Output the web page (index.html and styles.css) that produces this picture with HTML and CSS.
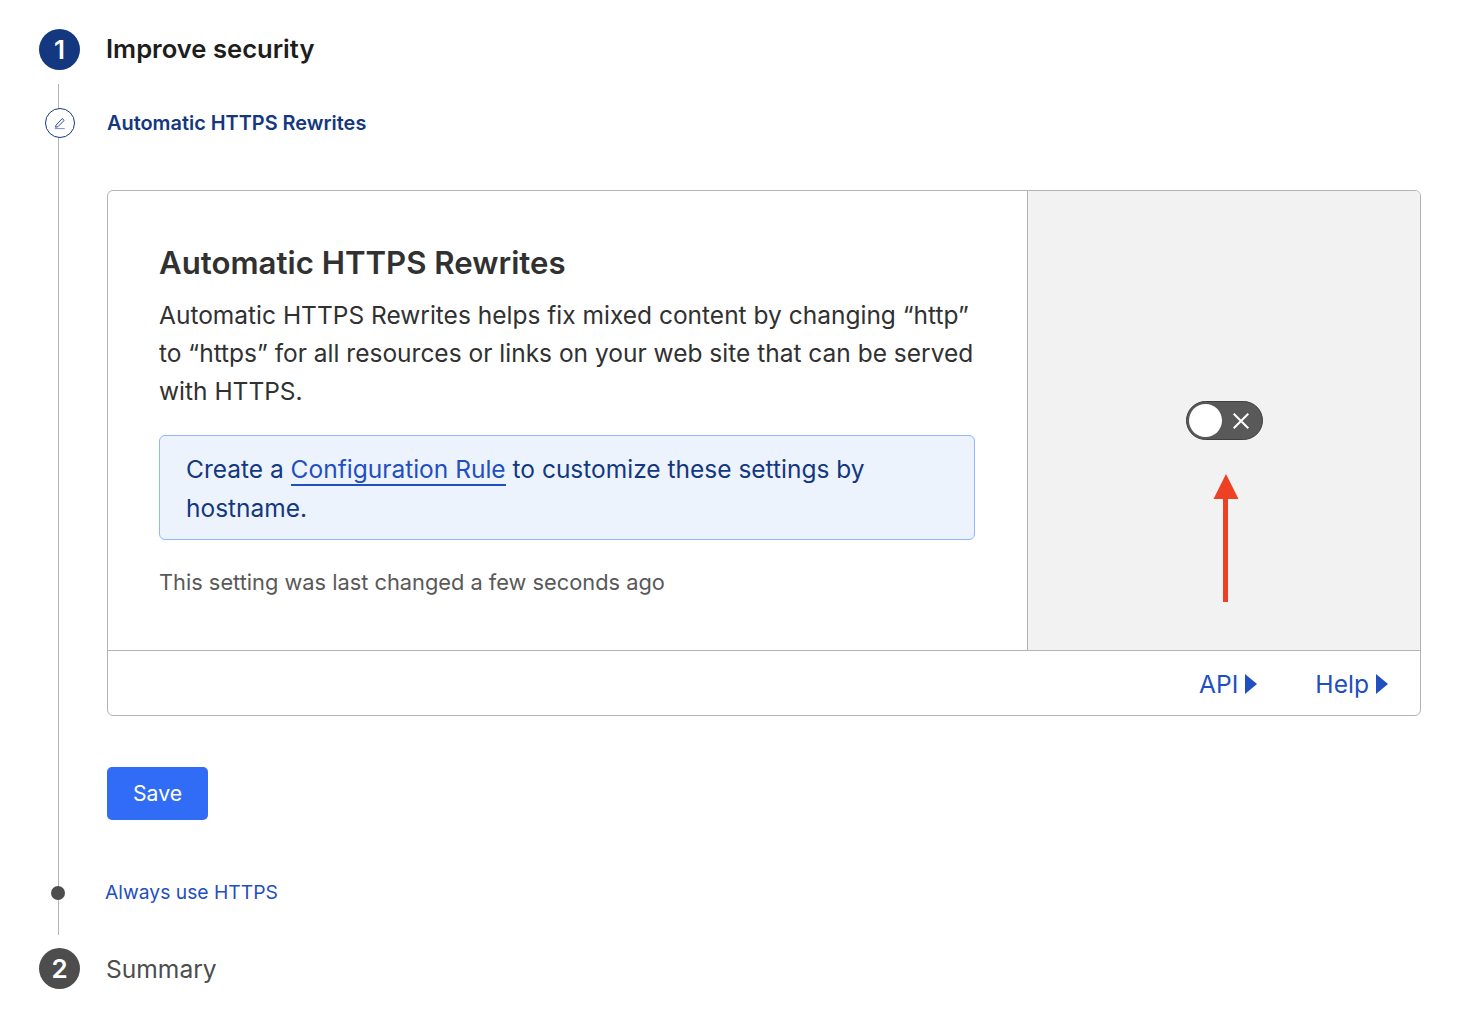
FILE: index.html
```html
<!DOCTYPE html>
<html lang="en">
<head>
    <meta charset="UTF-8">
    <meta name="viewport" content="width=device-width, initial-scale=1.0">
    <title>Improve security</title>
    <link rel="stylesheet" href="styles.css">
</head>
<body>

    <!-- Step 1 -->
    <div class="step-header">
        <div class="step-number active">1</div>
        <h1 class="step-title">Improve security</h1>
    </div>

    <div class="track">
        <div class="substep current">
            <span class="substep-edit">
                <svg width="14" height="14" viewBox="0 0 14 14" fill="none" stroke="#14387f" stroke-width="0.9">
                    <path d="M3 9.2 9.2 2.6l1.9 1.8-6.3 6.4-2.3.4z"/>
                    <path d="M1.8 12.6h10" stroke-opacity="0.6"/>
                </svg>
            </span>
            <span class="substep-label">Automatic HTTPS Rewrites</span>
        </div>

        <!-- Setting card -->
        <div class="card">
            <div class="card-main">
                <div class="card-text">
                    <h2>Automatic HTTPS Rewrites</h2>
                    <p class="description">Automatic HTTPS Rewrites helps fix mixed content by changing “http” to “https” for all resources or links on your web site that can be served with HTTPS.</p>
                    <div class="notice">Create a <a href="#">Configuration Rule</a> to customize these settings by hostname.</div>
                    <p class="last-changed">This setting was last changed a few seconds ago</p>
                </div>
                <div class="card-control">
                    <div class="toggle">
                        <span class="toggle-knob"></span>
                        <svg width="16" height="16" viewBox="0 0 16 16" stroke="#fff" stroke-width="2">
                            <path d="M.7.7l14.6 14.6M15.3.7.7 15.3"/>
                        </svg>
                    </div>
                    <svg class="arrow" width="26" height="128" viewBox="0 0 26 128">
                        <path d="M13 0 25.5 25H15v103h-5V25H.5z" fill="#ee4023"/>
                    </svg>
                </div>
            </div>
            <div class="card-footer">
                <a href="#">API<span class="caret"></span></a>
                <a href="#">Help<span class="caret"></span></a>
            </div>
        </div>

        <button class="save-btn">Save</button>

        <div class="substep next">
            <span class="substep-dot"></span>
            <a href="#" class="substep-link">Always use HTTPS</a>
        </div>
    </div>

    <!-- Step 2 -->
    <div class="step-header step-two">
        <div class="step-number">2</div>
        <div class="step-title muted">Summary</div>
    </div>

</body>
</html>
```

FILE: styles.css
```css
body {
    font-family: Inter, "Liberation Sans", sans-serif;
    background-color: #fff;
    color: #313131;
    margin: 0;
    padding: 0;
}

.step-header {
    display: flex;
    align-items: center;
    gap: 26px;
    padding: 29px 0 0 39px;
}

.step-number {
    width: 41px;
    height: 41px;
    border-radius: 50%;
    background-color: #4d4d4d;
    color: white;
    font-size: 26px;
    font-weight: 600;
    display: flex;
    align-items: center;
    justify-content: center;
}

.step-number.active {
    background-color: #14387f;
}

.step-title {
    margin: -2px 0 0;
    font-size: 25.6px;
    font-weight: 600;
    color: #1d1d1d;
}

.step-title.muted {
    margin-top: 0;
    font-size: 24.6px;
    font-weight: 400;
    color: #4d4d4d;
}

.step-two {
    padding-top: 13px;
}

/* vertical line joining the substeps */
.track {
    margin: 14px 55px 0 58px;
    padding: 0 0 0 48px;
    border-left: 1px solid #b3b3b3;
    height: 851px;
    box-sizing: border-box;
}

.substep {
    display: flex;
    align-items: center;
    position: relative;
}

.substep.current {
    height: 30px;
    padding-top: 24px;
}

.substep-edit {
    position: absolute;
    left: -62px;
    top: 24px;
    width: 28px;
    height: 28px;
    border: 1px solid #14387f;
    border-radius: 50%;
    background-color: #fff;
    display: flex;
    align-items: center;
    justify-content: center;
}

.substep-label {
    font-size: 19.9px;
    font-weight: 600;
    color: #14387f;
}

.card {
    margin-top: 52px;
    border: 1px solid #b3b3b3;
    border-radius: 6px;
    overflow: hidden;
}

.card-main {
    display: flex;
    height: 459px;
    border-bottom: 1px solid #b3b3b3;
}

.card-text {
    width: 816px;
    padding: 52px 52px 0 51px;
}

.card-text h2 {
    margin: 0;
    font-size: 31.2px;
    font-weight: 600;
    line-height: 40px;
}

.description {
    margin: 13px -6px 0 0;
    font-size: 24.5px;
    line-height: 38px;
}

.notice {
    margin-top: 25px;
    padding: 14px 26px 12px;
    background-color: #ecf3fd;
    border: 1px solid #8fb6ff;
    border-radius: 6px;
    font-size: 24.5px;
    line-height: 38.5px;
    color: #14387f;
}

.notice a {
    color: #1f4fc0;
    text-decoration: none;
    border-bottom: 2px solid #1f4fc0;
}

.last-changed {
    margin: 26px 0 0;
    font-size: 21.8px;
    line-height: 32px;
    color: #595959;
}

.card-control {
    flex: 1;
    background-color: #f2f2f2;
    border-left: 1px solid #b3b3b3;
    display: flex;
    flex-direction: column;
    align-items: center;
    padding-top: 210px;
}

.toggle {
    width: 77px;
    height: 39px;
    box-sizing: border-box;
    border-radius: 20px;
    background-color: #595959;
    border: 1px solid #404040;
    padding: 0 13px 0 2px;
    display: flex;
    align-items: center;
    justify-content: space-between;
}

.toggle-knob {
    width: 33px;
    height: 33px;
    border-radius: 50%;
    background-color: #fff;
}

.arrow {
    margin-top: 34px;
    margin-left: 4px;
}

.card-footer {
    height: 64px;
    box-sizing: border-box;
    padding: 2px 32px 0 0;
    display: flex;
    align-items: center;
    justify-content: flex-end;
    gap: 58px;
}

.card-footer a {
    color: #1f4fc0;
    font-size: 24.6px;
    text-decoration: none;
    display: flex;
    align-items: center;
}

.caret {
    margin-left: 7px;
    width: 0;
    height: 0;
    border-left: 12px solid #1f4fc0;
    border-top: 10.5px solid transparent;
    border-bottom: 10.5px solid transparent;
}

.save-btn {
    display: block;
    margin-top: 51px;
    padding: 0 0 2px;
    width: 101px;
    height: 53px;
    background-color: #316cf6;
    color: white;
    border: none;
    border-radius: 5px;
    font-family: inherit;
    font-size: 21.2px;
    cursor: pointer;
}

.substep.next {
    margin-top: 58px;
    height: 28px;
}

.substep-dot {
    position: absolute;
    left: -56px;
    top: 8px;
    width: 14px;
    height: 14px;
    border-radius: 50%;
    background-color: #4d4d4d;
}

.substep-link {
    margin-left: -2px;
    font-size: 19.3px;
    color: #1f4fc0;
    text-decoration: none;
}
```
